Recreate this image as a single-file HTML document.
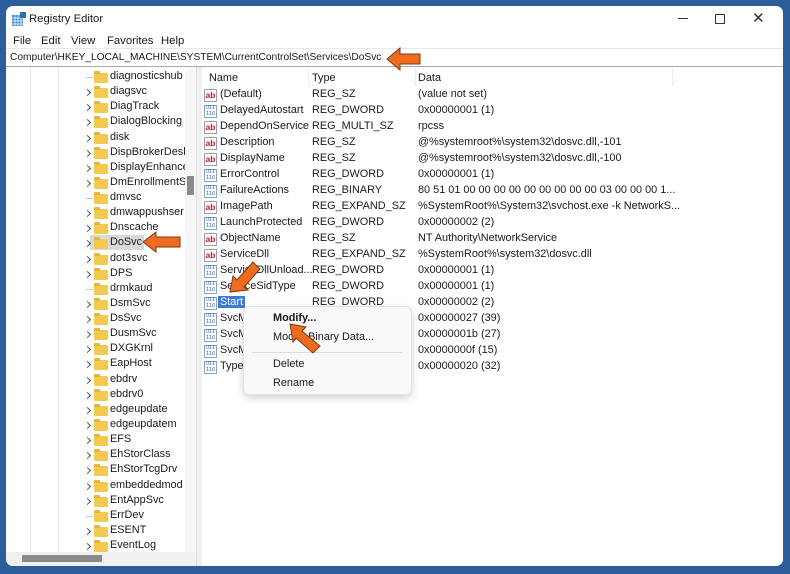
<!DOCTYPE html>
<html><head><style>
body{margin:0;width:790px;height:574px;background:#2a5d9a;position:relative;overflow:hidden;font-family:"Liberation Sans",sans-serif;font-size:10.9px;color:#1a1a1a}
.win{position:absolute;left:6px;top:6px;width:777px;height:560px;background:#fff;border-radius:7px;overflow:hidden}
.a{position:absolute;white-space:nowrap}
.tree .a{line-height:15px}
.fold{position:absolute;width:14px;height:10px;background:#f3c94f;border-radius:1px}
.fold:before{content:"";position:absolute;left:0;top:-2px;width:6px;height:3px;background:#e6b43c;border-radius:1px 1px 0 0}
.chev{position:absolute;width:4px;height:4px;border-right:1px solid #555;border-top:1px solid #555;transform:rotate(45deg)}
.ic{position:absolute;width:11px;height:11px;border:1px solid #8aa4c8;background:#fff;font-size:8px;line-height:11px;text-align:center}
.ab{color:#c8102e;font-weight:bold;font-size:8.5px;border-color:#a0a0a0}
.bin{color:#2d5fb3;font-size:5.5px;line-height:5.5px}
</style></head><body>
<div class="win">
<svg class="a" style="left:6px;top:6px" width="14" height="14"><rect x="0" y="3" width="11" height="11" fill="#3f8fd8"/><path d="M0 6h11M0 9h11M0 12h11M3 3v11M6 3v11M9 3v11" stroke="#fff" stroke-width=".7"/><rect x="8" y="0" width="6" height="6" fill="#2b6cb8"/></svg>
<div class="a" style="left:23px;top:7px;font-size:11.3px">Registry Editor</div>
<div class="a" style="left:672px;top:12px;width:10px;height:1px;background:#333"></div>
<div class="a" style="left:709px;top:8px;width:8px;height:8px;border:1px solid #333"></div>
<div class="a" style="left:746px;top:3px;font-size:15px;color:#333">✕</div>
<div class="a" style="left:7px;top:29px;font-size:11.3px">File</div>
<div class="a" style="left:35px;top:29px;font-size:11.3px">Edit</div>
<div class="a" style="left:65px;top:29px;font-size:11.3px">View</div>
<div class="a" style="left:101px;top:29px;font-size:11.3px">Favorites</div>
<div class="a" style="left:155px;top:29px;font-size:11.3px">Help</div>
<div class="a" style="left:0;top:42px;width:777px;height:1px;background:#e8e8e8"></div>
<div class="a" style="left:4px;top:46px;font-size:10.2px">Computer\HKEY_LOCAL_MACHINE\SYSTEM\CurrentControlSet\Services\DoSvc</div>
<div class="a" style="left:0;top:60px;width:777px;height:1px;background:#aaa"></div>
<div class="a tree" style="left:0;top:61px;width:190px;height:485px;overflow:hidden;background:#fff">
<div class="a" style="left:24px;top:0;width:1px;height:485px;background:#e4e4e4"></div>
<div class="a" style="left:52px;top:0;width:1px;height:485px;background:#e4e4e4"></div>
<div id="t"></div>
</div>
<div class="a" style="left:179px;top:61px;width:11px;height:485px;background:#f7f7f7"></div>
<div class="a" style="left:181px;top:170px;width:7px;height:19px;background:#8a8a8a"></div>
<div class="a" style="left:0;top:546px;width:190px;height:14px;background:#f0f0f0"></div>
<div class="a" style="left:16px;top:549px;width:80px;height:7px;background:#8a8a8a"></div>
<div class="a" style="left:190px;top:61px;width:6px;height:499px;background:#f0f0f0;border-left:1px solid #ddd;border-right:1px solid #ddd"></div>
<div class="a" style="left:196px;top:61px;width:581px;height:499px;background:#fff" id="l">
<div class="a" style="left:7px;top:5px">Name</div>
<div class="a" style="left:110px;top:5px">Type</div>
<div class="a" style="left:216px;top:5px">Data</div>
<div class="a" style="left:106px;top:1px;width:1px;height:18px;background:#eee"></div>
<div class="a" style="left:213px;top:1px;width:1px;height:18px;background:#eee"></div>
<div class="a" style="left:470px;top:1px;width:1px;height:18px;background:#eee"></div>
</div>
<div class="a" style="left:237px;top:300px;width:167px;height:87px;background:#f9f9f9;border:1px solid #e2e2e2;border-radius:6px;box-shadow:0 3px 8px rgba(0,0,0,.18)">
<div class="a" style="left:29px;top:5px;font-weight:bold">Modify...</div>
<div class="a" style="left:29px;top:24px">Modify Binary Data...</div>
<div class="a" style="left:8px;top:45px;width:150px;height:1px;background:#ddd"></div>
<div class="a" style="left:29px;top:51px">Delete</div>
<div class="a" style="left:29px;top:70px">Rename</div>
</div>
</div>
<svg class="a" style="left:0;top:0" width="790" height="574">
<g fill="#ef6c1f" stroke="#7a3a10" stroke-width="1">
<polygon points="387,59 400,48 400,54 420,54 420,64 400,64 400,70"/>
<polygon points="143,242 156,232 156,237 180,237 180,247 156,247 156,252"/>
<polygon points="230,292 233,276 237,280 253,262 260,269 244,287 248,290"/>
<polygon points="290,324 306,327 302,331 320,346 313,353 296,338 293,342"/>
</g>
</svg>
<script>
var t=["diagnosticshub","diagsvc","DiagTrack","DialogBlocking","disk","DispBrokerDesk","DisplayEnhance","DmEnrollmentS","dmvsc","dmwappushser","Dnscache","DoSvc","dot3svc","DPS","drmkaud","DsmSvc","DsSvc","DusmSvc","DXGKrnl","EapHost","ebdrv","ebdrv0","edgeupdate","edgeupdatem","EFS","EhStorClass","EhStorTcgDrv","embeddedmod","EntAppSvc","ErrDev","ESENT","EventLog"];
var na={0:1,8:1,14:1,29:1};var h="";
t.forEach(function(n,i){var y=2+i*15.13;
if(n=="DoSvc")h+='<div class="a" style="left:84px;top:'+(y)+'px;width:54px;height:15px;background:#d9d9d9"></div>';
if(na[i])h+='<div class="a" style="left:80px;top:'+(y+8)+'px;width:7px;height:1px;background:#ccc"></div>';
else h+='<div class="chev" style="left:79px;top:'+(y+6)+'px"></div>';
h+='<div class="fold" style="left:88px;top:'+(y+4)+'px"></div><div class="a" style="left:104px;top:'+y+'px">'+n+'</div>';});
document.getElementById('t').innerHTML=h;
var r=[["(Default)","REG_SZ","(value not set)",1],["DelayedAutostart","REG_DWORD","0x00000001 (1)",0],["DependOnService","REG_MULTI_SZ","rpcss",1],["Description","REG_SZ","@%systemroot%\\system32\\dosvc.dll,-101",1],["DisplayName","REG_SZ","@%systemroot%\\system32\\dosvc.dll,-100",1],["ErrorControl","REG_DWORD","0x00000001 (1)",0],["FailureActions","REG_BINARY","80 51 01 00 00 00 00 00 00 00 00 00 03 00 00 00 1...",0],["ImagePath","REG_EXPAND_SZ","%SystemRoot%\\System32\\svchost.exe -k NetworkS...",1],["LaunchProtected","REG_DWORD","0x00000002 (2)",0],["ObjectName","REG_SZ","NT Authority\\NetworkService",1],["ServiceDll","REG_EXPAND_SZ","%SystemRoot%\\system32\\dosvc.dll",1],["ServiceDllUnload...","REG_DWORD","0x00000001 (1)",0],["ServiceSidType","REG_DWORD","0x00000001 (1)",0],["Start","REG_DWORD","0x00000002 (2)",0],["SvcMemHardLimit","REG_DWORD","0x00000027 (39)",0],["SvcMemMidLimit","REG_DWORD","0x0000001b (27)",0],["SvcMemSoftLimit","REG_DWORD","0x0000000f (15)",0],["Type","REG_DWORD","0x00000020 (32)",0]];
var g="";r.forEach(function(e,i){var y=21+i*16;
g+='<div class="ic '+(e[3]?'ab':'bin')+'" style="left:2px;top:'+(y+1)+'px">'+(e[3]?'ab':'011<br>110')+'</div>';
var st=e[0]=="Start"?'background:#3d7ad6;color:#fff;padding:0 2px;left:16px;':'left:18px;';
g+='<div class="a" style="'+st+'top:'+y+'px">'+e[0]+'</div><div class="a" style="left:110px;top:'+y+'px">'+e[1]+'</div><div class="a" style="left:216px;top:'+y+'px">'+e[2]+'</div>';});
document.getElementById('l').insertAdjacentHTML('beforeend',g);
</script>
</body></html>
